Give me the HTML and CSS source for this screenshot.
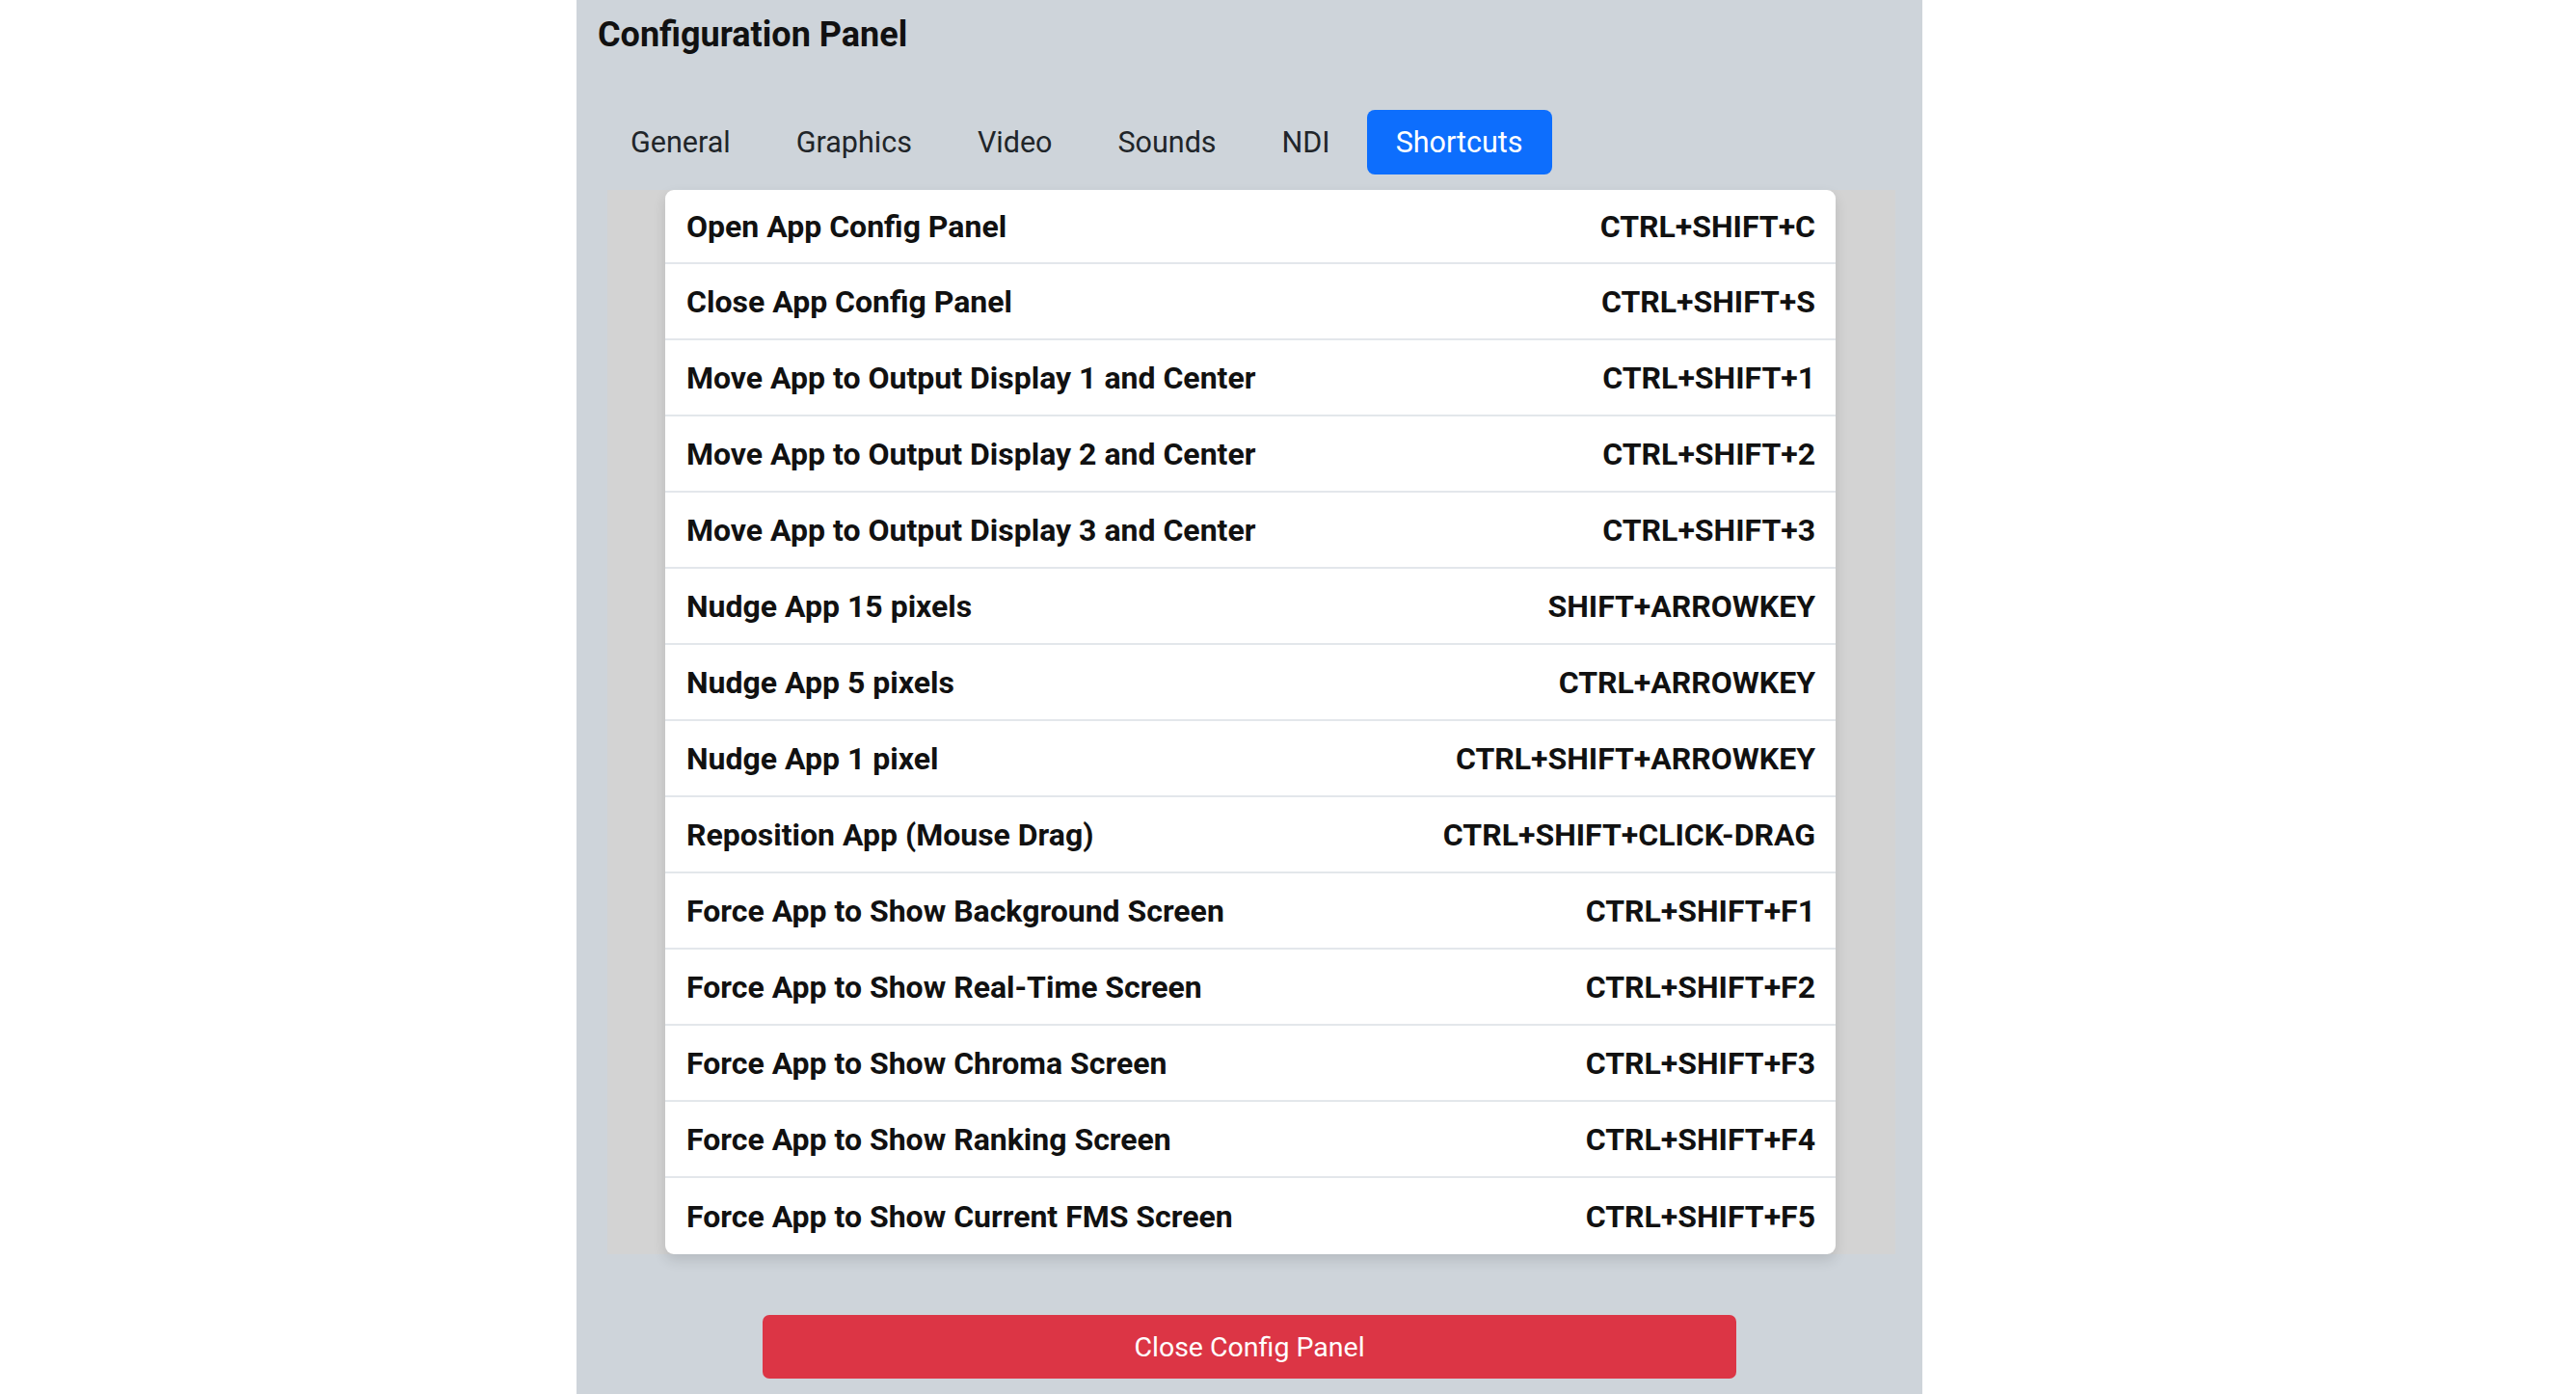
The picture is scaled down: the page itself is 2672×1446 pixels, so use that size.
FILE: index.html
```html
<!DOCTYPE html>
<html lang="en">
<head>
<meta charset="utf-8">
<title>Configuration Panel</title>
<link rel="stylesheet" href="styles.css">
</head>
<body>
<div class="panel">
  <h1 class="title">Configuration Panel</h1>
  <nav class="tabs">
    <span class="tab">General</span>
    <span class="tab">Graphics</span>
    <span class="tab">Video</span>
    <span class="tab">Sounds</span>
    <span class="tab">NDI</span>
    <span class="tab active">Shortcuts</span>
  </nav>
  <div class="content">
    <ul class="list">
      <li class="row"><span class="label">Open App Config Panel</span><span class="keys">CTRL+SHIFT+C</span></li>
      <li class="row"><span class="label">Close App Config Panel</span><span class="keys">CTRL+SHIFT+S</span></li>
      <li class="row"><span class="label">Move App to Output Display 1 and Center</span><span class="keys">CTRL+SHIFT+1</span></li>
      <li class="row"><span class="label">Move App to Output Display 2 and Center</span><span class="keys">CTRL+SHIFT+2</span></li>
      <li class="row"><span class="label">Move App to Output Display 3 and Center</span><span class="keys">CTRL+SHIFT+3</span></li>
      <li class="row"><span class="label">Nudge App 15 pixels</span><span class="keys">SHIFT+ARROWKEY</span></li>
      <li class="row"><span class="label">Nudge App 5 pixels</span><span class="keys">CTRL+ARROWKEY</span></li>
      <li class="row"><span class="label">Nudge App 1 pixel</span><span class="keys">CTRL+SHIFT+ARROWKEY</span></li>
      <li class="row"><span class="label">Reposition App (Mouse Drag)</span><span class="keys">CTRL+SHIFT+CLICK-DRAG</span></li>
      <li class="row"><span class="label">Force App to Show Background Screen</span><span class="keys">CTRL+SHIFT+F1</span></li>
      <li class="row"><span class="label">Force App to Show Real-Time Screen</span><span class="keys">CTRL+SHIFT+F2</span></li>
      <li class="row"><span class="label">Force App to Show Chroma Screen</span><span class="keys">CTRL+SHIFT+F3</span></li>
      <li class="row"><span class="label">Force App to Show Ranking Screen</span><span class="keys">CTRL+SHIFT+F4</span></li>
      <li class="row"><span class="label">Force App to Show Current FMS Screen</span><span class="keys">CTRL+SHIFT+F5</span></li>
    </ul>
  </div>
  <div class="footer">
    <button class="close-btn" type="button">Close Config Panel</button>
  </div>
</div>
</body>
</html>
```

FILE: styles.css
```css
html, body {
  margin: 0;
  padding: 0;
  background: #ffffff;
  height: 100%;
}
body {
  font-family: Roboto, "Liberation Sans", Arial, sans-serif;
  color: #212529;
  overflow: hidden;
}
.panel {
  margin-left: 598px;
  width: 1396px;
  min-height: 1446px;
  box-sizing: border-box;
  background: #ced4da;
  padding: 0 28px 0 22px;
}
.title {
  margin: 0;
  padding-top: 14px;
  height: 58px;
  box-sizing: border-box;
  font-size: 36px;
  line-height: 44px;
  font-weight: 700;
  color: #111;
}
.tabs {
  display: flex;
  gap: 8px;
  margin: 56px 0 0 4px;
  height: 67px;
}
.tab {
  display: flex;
  align-items: center;
  padding: 0 30px;
  font-size: 30.5px;
  color: #212529;
  border-radius: 8px;
}
.tab.active {
  background: #0d6efd;
  color: #ffffff;
}
.content {
  margin: 16px 0 0 10px;
  background: #d3d3d3;
}
.list {
  list-style: none;
  margin: 0 62px 0 60px;
  padding: 0;
  background: #ffffff;
  border-radius: 9px;
  box-shadow: 0 6px 14px rgba(0, 0, 0, 0.12);
  overflow: hidden;
}
.row {
  display: flex;
  justify-content: space-between;
  align-items: center;
  height: 77px;
  padding: 0 21px 0 22px;
  border-top: 2px solid #e3e7eb;
  font-size: 32px;
  font-weight: 700;
  color: #111;
}
.row:first-child {
  border-top: none;
  height: 75px;
}
.row:last-child {
  height: 79px;
}
.footer {
  display: flex;
  justify-content: center;
  margin-top: 63px;
  padding-left: 6px;
}
.close-btn {
  width: 1010px;
  height: 66px;
  border: none;
  border-radius: 7px;
  background: #dc3545;
  color: #ffffff;
  font-family: Roboto, "Liberation Sans", Arial, sans-serif;
  font-size: 28.5px;
  cursor: pointer;
}
```
